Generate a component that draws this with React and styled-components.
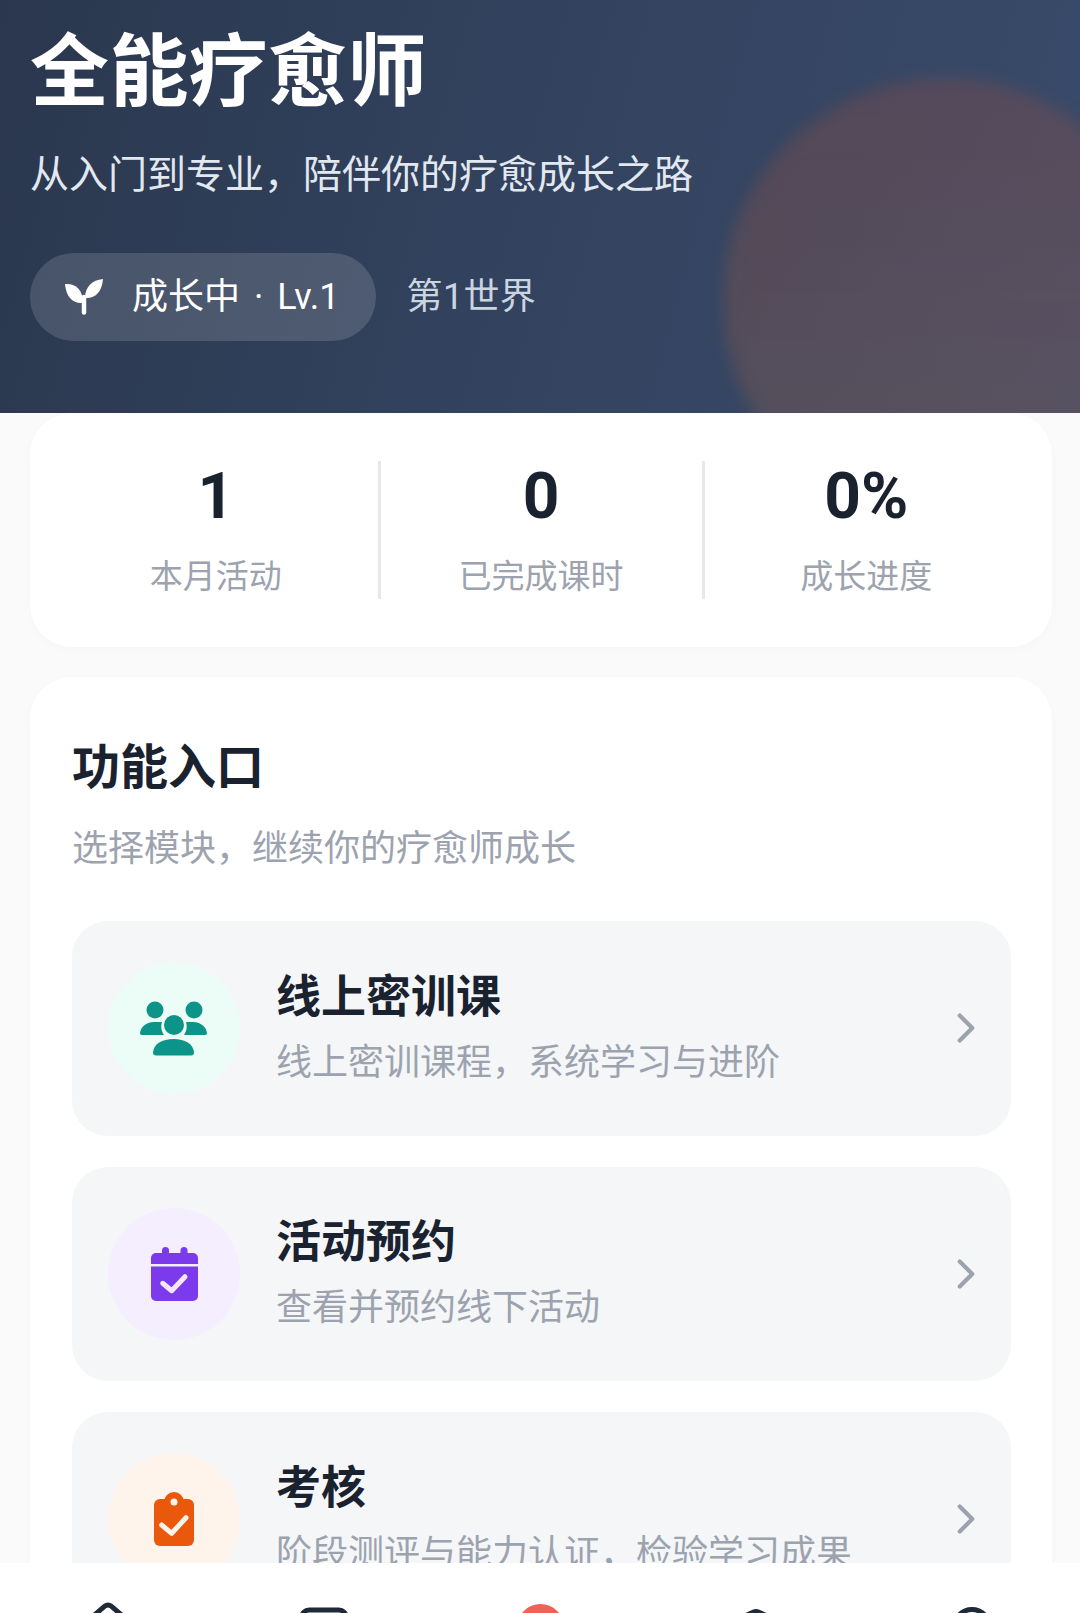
import React from 'react'
import styled, { createGlobalStyle } from 'styled-components'
import { House, ChevronRight, GraduationCap } from 'lucide-react'

const GlobalStyle = createGlobalStyle`
	html, body {
		margin: 0;
		padding: 0;
		background: #fafafb;
		font-family: Roboto, "Noto Sans CJK SC", sans-serif;
	}
	* {
		box-sizing: border-box;
	}
`
const Screen = styled.div`
	width: 1080px;
	height: 1613px;
	display: flex;
	flex-direction: column;
	overflow: hidden;
	background: #fafafb;
`
const Scroll = styled.div`
	flex: 1;
	min-height: 0;
	overflow: hidden;
`
const Hero = styled.header`
	position: relative;
	height: 413px;
	padding: 34px 30px 0;
	overflow: hidden;
	background: linear-gradient(105deg, #2a374e 0%, #33435f 50%, #394b6b 100%);
`
const Blob = styled.div`
	position: absolute;
	left: 723px;
	top: 78px;
	width: 444px;
	height: 444px;
	border-radius: 50%;
	background: linear-gradient(180deg, rgba(234, 80, 30, 0.17), rgba(230, 130, 60, 0.18));
	filter: blur(8px);
`
const HeroTitle = styled.h1`
	position: relative;
	margin: 0;
	font-size: 79px;
	line-height: 78px;
	font-weight: 700;
	letter-spacing: 0.4px;
	color: #fff;
`
const HeroSub = styled.p`
	position: relative;
	margin: 39px 0 0;
	font-size: 39px;
	line-height: 48px;
	color: #e2e8f0;
`
const HeroRow = styled.div`
	position: relative;
	display: flex;
	align-items: center;
	gap: 31px;
	margin-top: 54px;
`
const Pill = styled.div`
	display: flex;
	align-items: center;
	gap: 29px;
	height: 88px;
	padding: 0 36px 0 35px;
	border-radius: 44px;
	background: rgba(255, 255, 255, 0.14);
	font-size: 36px;
	color: #fff;
`
const PillText = styled.span`
	padding-bottom: 8px;
	word-spacing: 5px;
`
const World = styled.span`
	padding-bottom: 8px;
	font-size: 36px;
	letter-spacing: 0.3px;
	color: #cbd5e1;
`
const Stats = styled.section`
	display: grid;
	grid-template-columns: 1fr 327px 1fr;
	margin: 0 28px 0 30px;
	padding: 48px 24px;
	background: #fff;
	border-radius: 42px;
	box-shadow: 0 3px 12px rgba(0, 0, 0, 0.02);
`
const Stat = styled.div`
	display: flex;
	flex-direction: column;
	align-items: center;
	height: 138px;
	padding-top: 3px;
	border-style: solid;
	border-color: #e7e8ea;
	border-width: 0 ${({ $divided }) => ($divided ? '3px' : '0')};
`
const StatValue = styled.div`
	font-size: 64px;
	line-height: 66px;
	font-weight: 700;
	color: #1a2230;
`
const StatLabel = styled.div`
	margin-top: 23px;
	font-size: 33px;
	line-height: 48px;
	color: #9ca3af;
`
const Section = styled.section`
	margin: 30px 28px 0 30px;
	padding: 55px 41px 42px 42px;
	background: #fff;
	border-radius: 42px;
	box-shadow: 0 3px 12px rgba(0, 0, 0, 0.02);
`
const SectionTitle = styled.h2`
	margin: 0;
	font-size: 48px;
	line-height: 72px;
	font-weight: 700;
	color: #1a2230;
`
const SectionSub = styled.p`
	margin: 18px 0 0;
	font-size: 36px;
	line-height: 54px;
	color: #9ca3af;
`
const List = styled.div`
	display: flex;
	flex-direction: column;
	gap: 31px;
	margin-top: 45px;
`
const Item = styled.div`
	display: flex;
	align-items: center;
	gap: 36px;
	height: 214.5px;
	padding: 0 20px 0 36px;
	border-radius: 36px;
	background: #f4f6f8;
`
const IconCircle = styled.div`
	flex: none;
	display: flex;
	align-items: center;
	justify-content: center;
	width: 132px;
	height: 132px;
	border-radius: 50%;
	background: ${({ $bg }) => $bg};
`
const ItemText = styled.div`
	flex: 1;
	min-width: 0;
	display: flex;
	flex-direction: column;
	gap: 8px;
	padding-top: 1px;
`
const ItemTitle = styled.div`
	font-size: 45px;
	line-height: 60px;
	font-weight: 700;
	color: #1a2230;
`
const ItemSub = styled.div`
	font-size: 36px;
	line-height: 54px;
	color: #9ca3af;
`
const TabBar = styled.nav`
	flex: none;
	display: grid;
	grid-template-columns: repeat(5, 1fr);
	height: 50px;
	overflow: hidden;
	background: #fff;
`
const Tab = styled.div`
	display: flex;
	justify-content: center;
	padding-top: ${({ $top }) => $top}px;
	color: #1f2937;
`
const RedDot = styled.div`
	width: 47px;
	height: 47px;
	border-radius: 50%;
	background: #ef6258;
`

const SproutIcon = () => (
	<svg width="38" height="36" viewBox="0 0 38 36" fill="#fff">
		<path d="M0 5C10 4 18 10 18 24C8 25 1 18 0 5Z" />
		<path d="M38 0C37 13 30 20 20 19C20 8 27 1 38 0Z" />
		<path d="M19 18V33.5" stroke="#fff" strokeWidth="4.5" strokeLinecap="round" />
	</svg>
)

const UsersIcon = () => (
	<svg width="68" height="55" viewBox="0 0 68 55" fill="#0d9488">
		<circle cx="15" cy="9" r="8.5" />
		<circle cx="54" cy="9" r="8.5" />
		<circle cx="34" cy="24" r="10" />
		<path d="M0 32C1 25 7 21 14 21H22C20.5 26 21.5 30 24 34H2C.7 34 0 33.3 0 32Z" />
		<path d="M67 32C66 25 60 21 53 21H46C47.5 26 46.5 30 44 34H65C66.3 34 67 33.3 67 32Z" />
		<path d="M13 51C14 43 22 38 33.5 38C45 38 53 43 54 51C54.2 53 53 54.5 51 54.5H16C14 54.5 12.8 53 13 51Z" />
	</svg>
)

const CalendarIcon = () => (
	<svg width="47" height="54" viewBox="0 0 47 54" fill="#7c3aed">
		<rect x="11" y="0" width="7" height="10" rx="3.5" />
		<rect x="29.5" y="0" width="7" height="10" rx="3.5" />
		<path d="M0 11a5 5 0 0 1 5-5H42a5 5 0 0 1 5 5V17H0Z" />
		<path d="M0 19.5H47V49a5 5 0 0 1-5 5H5a5 5 0 0 1-5-5Z" />
		<path d="M11.7 36.3L20.7 43.7L34 29.7" fill="none" stroke="#f3e8ff" strokeWidth="5" strokeLinecap="round" strokeLinejoin="round" />
	</svg>
)

const ClipboardIcon = () => (
	<svg width="40" height="54" viewBox="0 0 40 54" fill="#ea580c">
		<circle cx="20" cy="10" r="10" />
		<rect x="0" y="7" width="40" height="47" rx="6" />
		<circle cx="20" cy="10" r="3.5" fill="#fff4ec" />
		<path d="M7.7 33L17.7 41.3L32 25.7" fill="none" stroke="#fff4ec" strokeWidth="5" strokeLinecap="round" strokeLinejoin="round" />
	</svg>
)

const BookIcon = () => (
	<svg width="54" height="60" viewBox="0 0 54 60" fill="none" stroke="#1f2937" strokeWidth="5">
		<rect x="5" y="3" width="44" height="54" rx="7" />
	</svg>
)

const UserIcon = () => (
	<svg width="60" height="60" viewBox="0 0 60 60" fill="none" stroke="#1f2937" strokeWidth="5">
		<circle cx="30" cy="24" r="17.5" />
	</svg>
)

const stats = [
	{ value: '1', label: '本月活动' },
	{ value: '0', label: '已完成课时', divided: true },
	{ value: '0%', label: '成长进度' },
]

const entries = [
	{ title: '线上密训课', sub: '线上密训课程，系统学习与进阶', bg: '#ecfdf7', Icon: UsersIcon },
	{ title: '活动预约', sub: '查看并预约线下活动', bg: '#f4eefe', Icon: CalendarIcon },
	{ title: '考核', sub: '阶段测评与能力认证，检验学习成果', bg: '#fff4ec', Icon: ClipboardIcon },
]

const App = () => (
	<Screen>
		<GlobalStyle />
		<Scroll>
			<Hero>
				<Blob />
				<HeroTitle>全能疗愈师</HeroTitle>
				<HeroSub>从入门到专业，陪伴你的疗愈成长之路</HeroSub>
				<HeroRow>
					<Pill>
						<SproutIcon />
						<PillText>成长中 · Lv.1</PillText>
					</Pill>
					<World>第1世界</World>
				</HeroRow>
			</Hero>
			<Stats>
				{stats.map(stat => (
					<Stat key={stat.label} $divided={stat.divided}>
						<StatValue>{stat.value}</StatValue>
						<StatLabel>{stat.label}</StatLabel>
					</Stat>
				))}
			</Stats>
			<Section>
				<SectionTitle>功能入口</SectionTitle>
				<SectionSub>选择模块，继续你的疗愈师成长</SectionSub>
				<List>
					{entries.map(({ title, sub, bg, Icon }) => (
						<Item key={title}>
							<IconCircle $bg={bg}>
								<Icon />
							</IconCircle>
							<ItemText>
								<ItemTitle>{title}</ItemTitle>
								<ItemSub>{sub}</ItemSub>
							</ItemText>
							<ChevronRight size={50} color="#9ca3af" strokeWidth={2} />
						</Item>
					))}
				</List>
			</Section>
		</Scroll>
		<TabBar>
			<Tab $top={37}><House size={60} strokeWidth={2} /></Tab>
			<Tab $top={44}><BookIcon /></Tab>
			<Tab $top={41}><RedDot /></Tab>
			<Tab $top={35}><GraduationCap size={66} strokeWidth={2} /></Tab>
			<Tab $top={40}><UserIcon /></Tab>
		</TabBar>
	</Screen>
)

export default App
